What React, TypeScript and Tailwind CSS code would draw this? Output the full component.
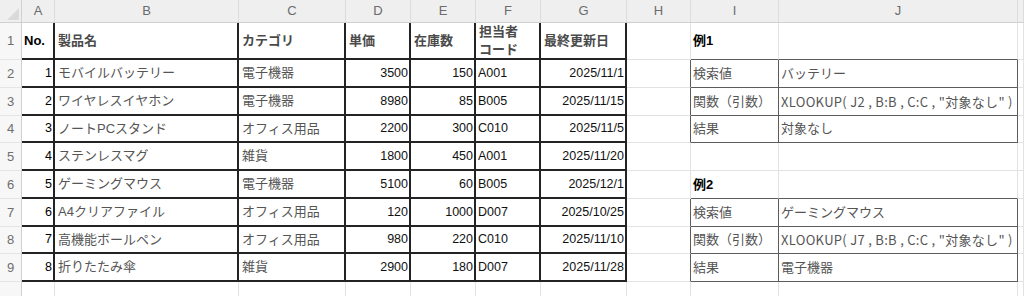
import React from 'react';

type Product = {
  no: number;
  name: string;
  category: string;
  price: number;
  stock: number;
  code: string;
  updated: string;
};

const products: Product[] = [
  { no: 1, name: 'モバイルバッテリー', category: '電子機器', price: 3500, stock: 150, code: 'A001', updated: '2025/11/1' },
  { no: 2, name: 'ワイヤレスイヤホン', category: '電子機器', price: 8980, stock: 85, code: 'B005', updated: '2025/11/15' },
  { no: 3, name: 'ノートPCスタンド', category: 'オフィス用品', price: 2200, stock: 300, code: 'C010', updated: '2025/11/5' },
  { no: 4, name: 'ステンレスマグ', category: '雑貨', price: 1800, stock: 450, code: 'A001', updated: '2025/11/20' },
  { no: 5, name: 'ゲーミングマウス', category: '電子機器', price: 5100, stock: 60, code: 'B005', updated: '2025/12/1' },
  { no: 6, name: 'A4クリアファイル', category: 'オフィス用品', price: 120, stock: 1000, code: 'D007', updated: '2025/10/25' },
  { no: 7, name: '高機能ボールペン', category: 'オフィス用品', price: 980, stock: 220, code: 'C010', updated: '2025/11/10' },
  { no: 8, name: '折りたたみ傘', category: '雑貨', price: 2900, stock: 180, code: 'D007', updated: '2025/11/28' },
];

// right side lookup examples, indexed by sheet row (1..9)
const side: Record<number, { label?: string; key?: string; value?: string; formula?: boolean }> = {
  1: { label: '例1' },
  2: { key: '検索値', value: 'バッテリー' },
  3: { key: '関数（引数）', value: 'XLOOKUP( J2 , B:B , C:C , "対象なし" )', formula: true },
  4: { key: '結果', value: '対象なし' },
  6: { label: '例2' },
  7: { key: '検索値', value: 'ゲーミングマウス' },
  8: { key: '関数（引数）', value: 'XLOOKUP( J7 , B:B , C:C , "対象なし" )', formula: true },
  9: { key: '結果', value: '電子機器' },
};

const letters = ['A', 'B', 'C', 'D', 'E', 'F', 'G', 'H', 'I', 'J', ''];

const font = { fontFamily: '"Liberation Sans", "Noto Sans CJK JP", sans-serif' };

const grid = 'border-r border-b border-[#e2e2e2]';
const thick = 'border-r-2 border-b-2 border-[#232323]';
const head = `${thick} flex items-center pl-[3px] font-bold text-[#4a4a4a]`;

const App: React.FC = () => {
  const rows = Array.from({ length: 9 }, (_, i) => i + 1);

  return (
    <div
      className="grid h-[296px] w-[1024px] overflow-hidden bg-white text-[13px] text-[#222] grid-cols-[22px_33px_184px_107px_65px_65px_65px_86px_64px_88px_239px_1fr] grid-rows-[23px_37px_28px_28px_27px_28px_28px_28px_27px_28px_1fr]"
      style={font}
    >
      {/* Column headers */}
      <div className="relative border-r border-b border-[#d0d0d0] bg-[#efefef]">
        <svg className="absolute right-[2px] bottom-[2px]" width="12" height="12" viewBox="0 0 12 12">
          <polygon points="12,0 12,12 0,12" fill="#dadada" />
        </svg>
      </div>
      {letters.map((l, i) => (
        <div
          key={i}
          className="flex items-center justify-center border-r border-b border-r-[#dcdcdc] border-b-[#cfcfcf] bg-[#efefef] text-[13px] text-[#6b6b6b]"
        >
          {l}
        </div>
      ))}

      {rows.map((r) => {
        const p = products[r - 2];
        const s = side[r];
        const inBox = s?.key !== undefined;
        const aboveBox = r === 1 || r === 6;
        return (
          <React.Fragment key={r}>
            <div className="flex items-center justify-center border-r border-b border-r-[#cfcfcf] border-b-[#e4e4e4] bg-[#f7f7f7] text-[13px] text-[#6e6e6e]">
              {r}
            </div>

            {r === 1 ? (
              <>
                <div className={`${thick} flex items-center pl-[2px] font-bold text-[13px] text-black`}>No.</div>
                <div className={head}>製品名</div>
                <div className={head}>カテゴリ</div>
                <div className={head}>単価</div>
                <div className={head}>在庫数</div>
                <div className={`${thick} flex flex-col justify-center pl-[3px] font-bold leading-[18px] text-[#4a4a4a]`}>
                  <span>担当者</span>
                  <span>コード</span>
                </div>
                <div className={head}>最終更新日</div>
              </>
            ) : (
              <>
                <div className={`${thick} flex items-center justify-end pr-[1px] text-[12.5px] text-black`}>{p.no}</div>
                <div className={`${thick} flex items-center pl-[3px] text-[#555]`}>{p.name}</div>
                <div className={`${thick} flex items-center pl-[3px] text-[#555]`}>{p.category}</div>
                <div className={`${thick} flex items-center justify-end pr-[1px] text-[12.5px] text-[#111]`}>{p.price}</div>
                <div className={`${thick} flex items-center justify-end pr-[1px] text-[12.5px] text-[#111]`}>{p.stock}</div>
                <div className={`${thick} flex items-center pl-[2px] text-[12.5px] text-[#111]`}>{p.code}</div>
                <div className={`${thick} flex items-center justify-end pr-[1px] text-[12.5px] text-[#111]`}>{p.updated}</div>
              </>
            )}

            {/* H */}
            <div className={`border-r border-b border-b-[#e2e2e2] ${inBox ? 'border-r-[#5c5c5c]' : 'border-r-[#e2e2e2]'}`} />

            {/* I */}
            <div
              className={`flex items-center border-r border-b pl-[2px] ${
                inBox ? 'border-[#5c5c5c] text-[#555]' : aboveBox ? 'border-r-[#e2e2e2] border-b-[#5c5c5c]' : 'border-[#e2e2e2]'
              }`}
            >
              {s?.label && <span className="font-bold text-black">{s.label}</span>}
              {s?.key}
            </div>

            {/* J */}
            <div
              className={`flex items-center whitespace-nowrap border-r border-b pl-[2px] ${
                inBox ? 'border-[#5c5c5c] text-[#555]' : aboveBox ? 'border-r-[#e2e2e2] border-b-[#5c5c5c]' : 'border-[#e2e2e2]'
              } ${s?.formula ? 'tracking-[0.3px] text-[#333]' : ''}`}
              style={s?.formula ? { fontFamily: '"Noto Sans CJK JP", sans-serif' } : undefined}
            >
              {s?.value}
            </div>

            {/* K */}
            <div className={grid} />
          </React.Fragment>
        );
      })}

      {/* trailing partial row */}
      <div className="border-r border-r-[#cfcfcf] bg-[#f7f7f7]" />
      {letters.map((_, i) => (
        <div key={i} className="border-r border-[#e2e2e2]" />
      ))}
    </div>
  );
};

export default App;
